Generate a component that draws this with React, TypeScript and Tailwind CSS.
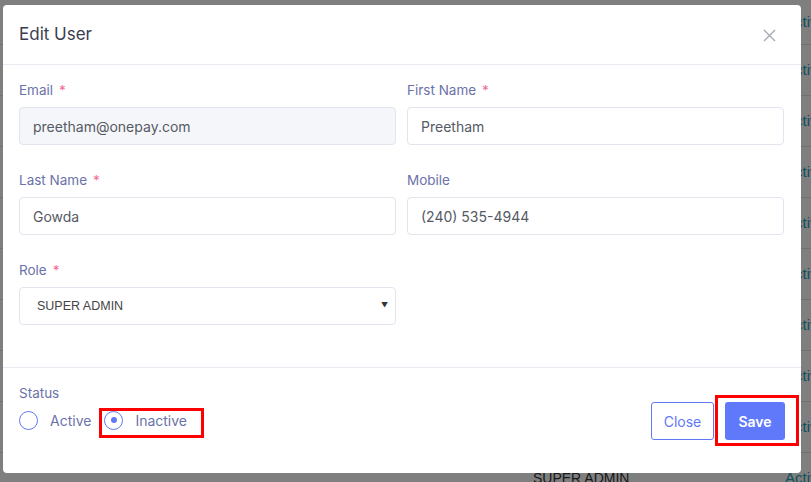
import React, { useState } from 'react';

const font = "font-['Inter','Open_Sans',sans-serif]";

const rows = [45, 51, 51, 51, 51, 51, 51, 51, 51, 51];

const Label = ({ text, required }: { text: string; required?: boolean }) => (
    <div className="h-[18px] flex items-center text-[13.5px] text-[#6b72a9] leading-[18px]">
        {text}
        {required && <span className="ml-[6px] text-[#f26a98]">*</span>}
    </div>
);

const Field = ({ label, value, required, disabled }: { label: string; value: string; required?: boolean; disabled?: boolean }) => (
    <div className="flex flex-col gap-[8px]">
        <Label text={label} required={required} />
        <input
            readOnly
            value={value}
            className={
                'h-[38px] w-full rounded-[4px] border border-[#e2e4ee] px-[13px] text-[14px] text-[#555a64] outline-none ' +
                (disabled ? 'bg-[#f5f6f9]' : 'bg-white')
            }
        />
    </div>
);

const Radio = ({ checked, label, onClick }: { checked: boolean; label: string; onClick: () => void }) => (
    <button onClick={onClick} className="flex items-center gap-[12px] h-[20px]">
        <span className="w-[19px] h-[19px] rounded-full border-[1.5px] border-[#6078f6] flex items-center justify-center">
            {checked && <span className="w-[6px] h-[6px] rounded-full bg-[#6078f6]" />}
        </span>
        <span className="text-[14px] text-[#6b72a9]">{label}</span>
    </button>
);

export default function App() {
    const [status, setStatus] = useState<'active' | 'inactive'>('inactive');

    return (
        <div className={`relative w-[811px] h-[482px] overflow-hidden bg-white ${font}`}>
            {/* Page behind the dialog */}
            <div className="flex flex-col">
                {rows.map((h, i) => (
                    <div
                        key={i}
                        style={{ height: h }}
                        className="flex items-center border-b border-[#dee2e6] text-[14px] whitespace-nowrap font-['Liberation_Sans',sans-serif]"
                    >
                        <span className="ml-[533px] w-[250px] shrink-0 text-[#333]">{i === rows.length - 1 ? 'SUPER ADMIN' : ''}</span>
                        <span className="ml-[2px] shrink-0 text-[#17a2b8] text-[15px]">Active</span>
                    </div>
                ))}
            </div>

            {/* Backdrop */}
            <div className="absolute inset-0 bg-black/50" />

            {/* Dialog */}
            <div className="absolute left-[3px] top-[5px] w-[798px] h-[468px] bg-white rounded-[4px] flex flex-col">
                <div className="h-[60px] flex items-center justify-between px-[16px] border-b border-[#e9ebf2]">
                    <span className="text-[17px] text-[#3b3d4f]">Edit User</span>
                    <svg width="13" height="13" viewBox="0 0 13 13" className="mr-[9px] mt-[2px]">
                        <path d="M1 1L12 12M12 1L1 12" stroke="#a6a9b6" strokeWidth="1.4" />
                    </svg>
                </div>

                <div className="px-[16px] pt-[16px] pb-[42px] border-b border-[#e9ebf2]">
                    <div className="grid grid-cols-2 gap-x-[11px] gap-y-[26px] pr-[1px]">
                        <Field label="Email" value="preetham@onepay.com" required disabled />
                        <Field label="First Name" value="Preetham" required />
                        <Field label="Last Name" value="Gowda" required />
                        <Field label="Mobile" value="(240) 535-4944" />
                        <div className="flex flex-col gap-[8px]">
                            <Label text="Role" required />
                            <div className="h-[38px] rounded-[4px] border border-[#e2e4ee] flex items-center justify-between pl-[17px] pr-[7px]">
                                <span className="text-[12.5px] text-[#444] font-['Liberation_Sans',sans-serif]">SUPER ADMIN</span>
                                <span className="text-[7px] text-[#333]">▼</span>
                            </div>
                        </div>
                    </div>
                </div>

                <div className="relative flex-1 flex justify-between px-[16px] pt-[16px]">
                    <div className="flex flex-col">
                        <div className="h-[18px] flex items-center text-[13.5px] text-[#6b72a9]">Status</div>
                        <div className="mt-[8px] flex items-center gap-[13px]">
                            <Radio checked={status === 'active'} label="Active" onClick={() => setStatus('active')} />
                            <Radio checked={status === 'inactive'} label="Inactive" onClick={() => setStatus('inactive')} />
                        </div>
                    </div>
                    <div className="mt-[18px] flex gap-[11px] h-[38px]">
                        <button className="w-[63px] h-[38px] rounded-[3px] border border-[#6078f6] text-[#6078f6] text-[14px] bg-white">
                            Close
                        </button>
                        <button className="w-[60px] h-[38px] rounded-[3px] bg-[#5f79fa] text-white text-[14px] font-semibold">
                            Save
                        </button>
                    </div>

                    {/* Highlight boxes */}
                    <div className="absolute left-[96px] top-[40px] w-[105px] h-[30px] border-[3px] border-[#ff0000]" />
                    <div className="absolute left-[712px] top-[27px] w-[84px] h-[51px] border-[3px] border-[#ff0000]" />
                </div>
            </div>
        </div>
    );
}
